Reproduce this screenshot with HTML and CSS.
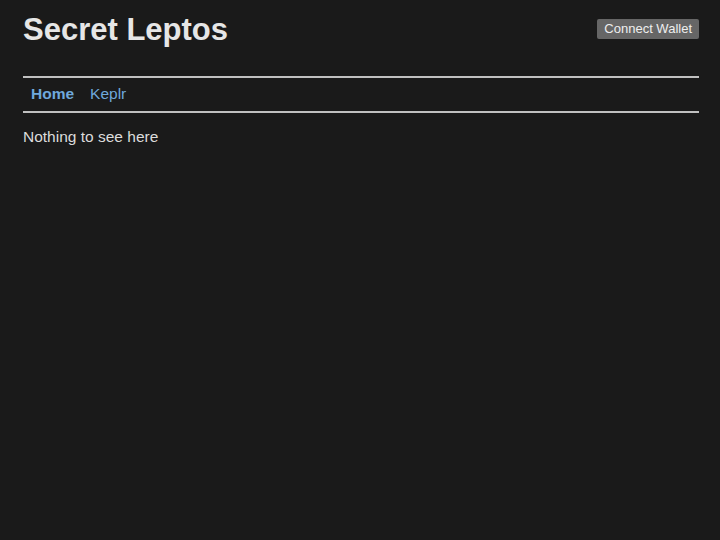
FILE: index.html
```html
<!DOCTYPE html>
<html>
<head>
<meta charset="utf-8">
<link rel="stylesheet" href="styles.css">
</head>
<body>
<div class="page">
  <header class="header">
    <h1 class="title">Secret Leptos</h1>
    <button class="wallet">Connect Wallet</button>
  </header>
  <hr class="rule">
  <nav class="nav">
    <a class="link active" href="#">Home</a>
    <a class="link" href="#">Keplr</a>
  </nav>
  <hr class="rule">
  <p class="content">Nothing to see here</p>
</div>
</body>
</html>
```
FILE: styles.css
```css
html, body {
  margin: 0;
  background: #1a1a1a;
  color: #e0e0e0;
  font-family: "Liberation Sans", Arial, sans-serif;
}
.page {
  padding: 0 21px 0 23px;
}
.header {
  display: flex;
  justify-content: space-between;
  align-items: flex-start;
  padding-top: 11px;
  height: 76px;
  box-sizing: border-box;
}
.title {
  margin: 0;
  font-size: 31px;
  font-weight: bold;
  line-height: 37px;
  color: #e6e6e6;
}
.wallet {
  margin-top: 8px;
  background: #666;
  color: #eee;
  border: none;
  border-radius: 2px;
  font-family: "Liberation Sans", Arial, sans-serif;
  font-size: 13px;
  padding: 2px 7px;
  height: 20px;
  line-height: 16px;
}
.rule {
  margin: 0;
  border: none;
  height: 2px;
  background: #c0c0c0;
}
.nav {
  display: flex;
  gap: 16px;
  padding: 0 8px 2px;
  height: 33px;
  box-sizing: border-box;
  align-items: center;
}
.link {
  color: #6fa8dc;
  text-decoration: none;
  font-size: 15.5px;
}
.link.active {
  font-weight: bold;
}
.content {
  margin: 14px 0 0;
  font-size: 15.5px;
  line-height: 20px;
  color: #dcdcdc;
}
```
